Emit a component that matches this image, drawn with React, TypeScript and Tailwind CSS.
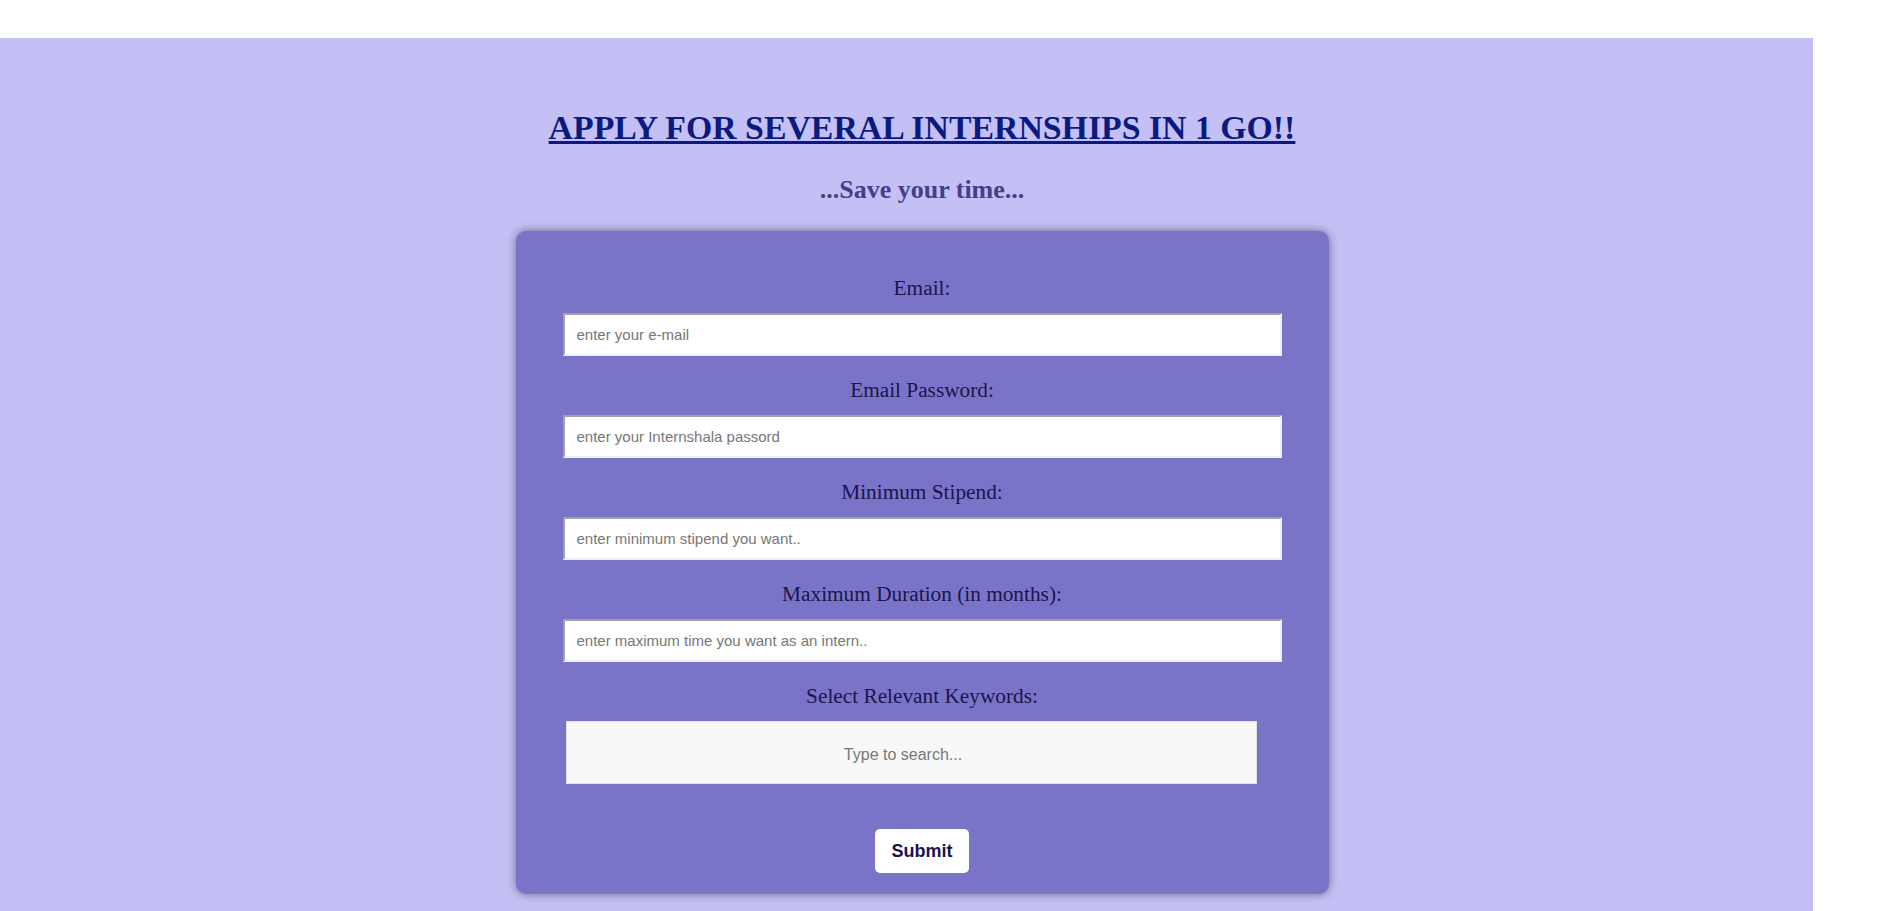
import { useState } from "react";

const labelStyle: string = "block text-center text-[21.3px] leading-[24px] text-[#1b154d] mb-[13px]";
const inputStyle: string =
    "w-full h-[43px] bg-white border-2 border-t-[#a2a2a2] border-l-[#a2a2a2] border-b-[#eef1f7] border-r-[#eef1f7] px-[12px] text-[15px] text-[#333] placeholder:text-[#777] outline-none mb-[22px]";

const fields = [
    { label: "Email:", placeholder: "enter your e-mail", type: "email" },
    { label: "Email Password:", placeholder: "enter your Internshala passord", type: "password" },
    { label: "Minimum Stipend:", placeholder: "enter minimum stipend you want..", type: "text" },
    { label: "Maximum Duration (in months):", placeholder: "enter maximum time you want as an intern..", type: "text" },
];

const App = () => {
    const [search, setSearch] = useState("");

    return (
        <div className="w-full min-h-[911px] bg-white pt-[38px] font-['Liberation_Serif',serif]">
            <div className="w-[1813px] min-h-[873px] bg-[#c4c0f5] pl-[31px] pt-[71px] flex flex-col items-center">
                <h1 className="text-[33.8px] leading-[38px] font-bold underline text-[#0b1a80] text-center">
                    APPLY FOR SEVERAL INTERNSHIPS IN 1 GO!!
                </h1>
                <h2 className="mt-[28px] text-[26px] leading-[30px] font-bold text-[#483d8b] text-center">
                    ...Save your time...
                </h2>
                <form
                    className="mt-[26px] w-[813px] bg-[#7a74c9] rounded-[10px] shadow-[0_0_10px_rgba(0,0,0,0.45)] px-[47px] pt-[45px] pb-[21px] flex flex-col"
                    onSubmit={(e) => e.preventDefault()}
                >
                    {fields.map((f) => (
                        <div key={f.label} className="flex flex-col">
                            <label className={labelStyle}>{f.label}</label>
                            <input className={`${inputStyle} font-['Liberation_Sans',sans-serif]`} type={f.type} placeholder={f.placeholder} />
                        </div>
                    ))}
                    <label className={`${labelStyle} mb-[12px]`}>Select Relevant Keywords:</label>
                    <div className="ml-[3px] w-[691px] h-[63px] bg-[#f8f8f8] border border-[#e2e2e2] flex items-center pt-[5px]">
                        <input
                            className="w-full h-full bg-transparent text-center text-[16px] text-[#333] placeholder:text-[#777] outline-none font-['Liberation_Sans',sans-serif] pr-[16px]"
                            placeholder="Type to search..."
                            value={search}
                            onChange={(e) => setSearch(e.target.value)}
                        />
                    </div>
                    <div className="flex justify-center mt-[45px]">
                        <button
                            type="submit"
                            className="w-[94px] h-[44px] bg-white rounded-[5px] text-[18px] font-bold text-[#1a1150] font-['Liberation_Sans',sans-serif]"
                        >
                            Submit
                        </button>
                    </div>
                </form>
            </div>
        </div>
    );
};

export default App;
